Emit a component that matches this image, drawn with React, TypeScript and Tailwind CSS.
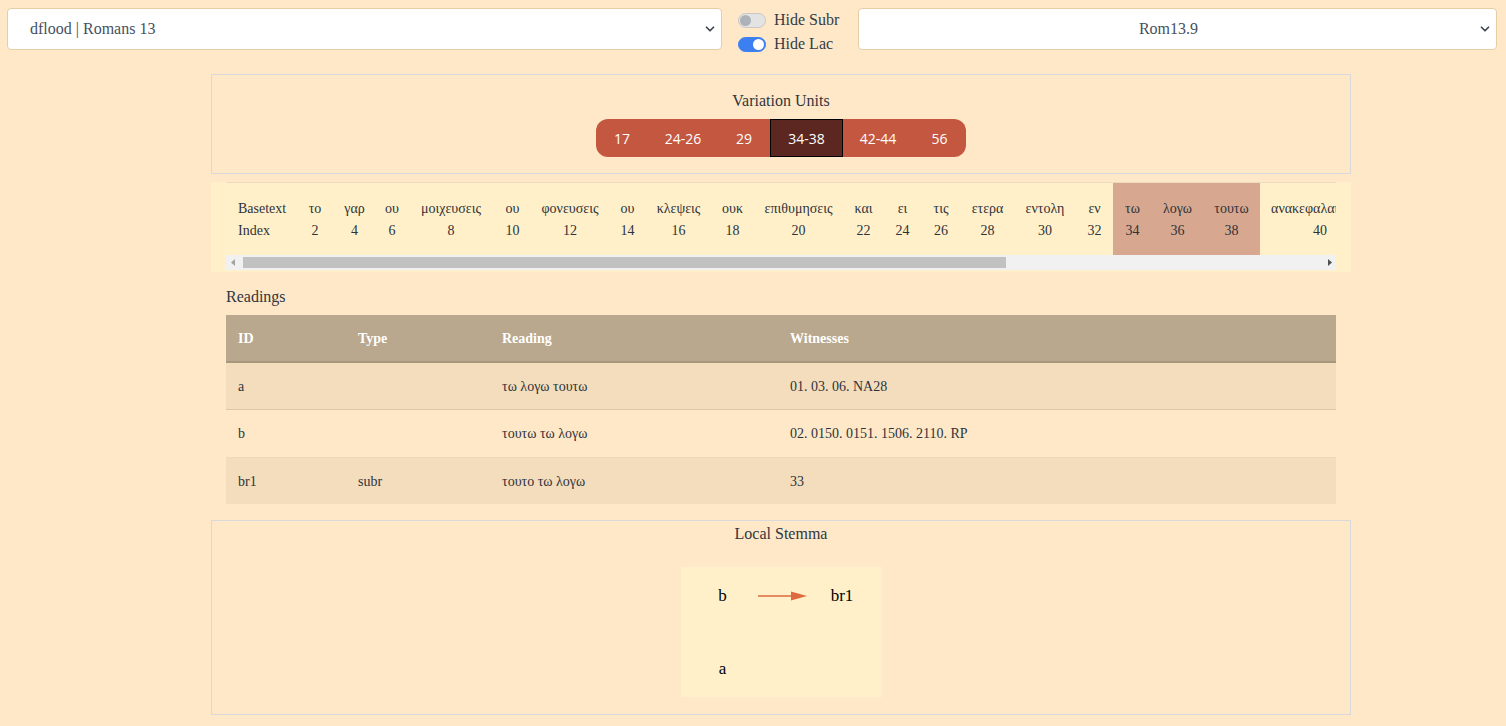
import { ChevronDown } from "lucide-react";

type Col = { word: string; index: number; w: number };

const basetext: Col[] = [
  { word: "το", index: 2, w: 36 },
  { word: "γαρ", index: 4, w: 43 },
  { word: "ου", index: 6, w: 32 },
  { word: "μοιχευσεις", index: 8, w: 86 },
  { word: "ου", index: 10, w: 37 },
  { word: "φονευσεις", index: 12, w: 78 },
  { word: "ου", index: 14, w: 37 },
  { word: "κλεψεις", index: 16, w: 65 },
  { word: "ουκ", index: 18, w: 43 },
  { word: "επιθυμησεις", index: 20, w: 89 },
  { word: "και", index: 22, w: 41 },
  { word: "ει", index: 24, w: 37 },
  { word: "τις", index: 26, w: 40 },
  { word: "ετερα", index: 28, w: 53 },
  { word: "εντολη", index: 30, w: 62 },
  { word: "εν", index: 32, w: 37 },
  { word: "τω", index: 34, w: 39 },
  { word: "λογω", index: 36, w: 51 },
  { word: "τουτω", index: 38, w: 57 },
  { word: "ανακεφαλαιουται", index: 40, w: 120 },
];

const units = [
  { label: "17", w: 52 },
  { label: "24-26", w: 70 },
  { label: "29", w: 52 },
  { label: "34-38", w: 73, active: true },
  { label: "42-44", w: 70 },
  { label: "56", w: 53 },
];

const readings = [
  { id: "a", type: "", text: "τω λογω τουτω", wits: "01. 03. 06. NA28" },
  { id: "b", type: "", text: "τουτω τω λογω", wits: "02. 0150. 0151. 1506. 2110. RP" },
  { id: "br1", type: "subr", text: "τουτο τω λογω", wits: "33" },
];

const Toggle = ({ on, label }: { on?: boolean; label: string }) => (
  <div className="flex items-center gap-2 h-[24px]">
    <div
      className={`w-[28px] h-[15px] rounded-full border flex items-center px-[1px] ${
        on ? "bg-[#3b7ff0] border-[#3b7ff0] justify-end" : "bg-[#e3e3e3] border-[#c8c8c8] justify-start"
      }`}
    >
      <div className={`w-[11px] h-[11px] rounded-full ${on ? "bg-white" : "bg-[#adb2b8]"}`} />
    </div>
    <span className="text-[16px] text-[#343c48]">{label}</span>
  </div>
);

export default function App() {
  return (
    <div className="min-h-[726px] bg-[#ffe8c7] text-[#343c48] font-['Liberation_Serif',serif]">
      {/* top controls */}
      <div className="flex items-start pl-[7px] pr-[9px] pt-[8px] gap-[16px]">
        <div className="w-[715px] h-[42px] bg-white border border-[#e6cda5] rounded-[4px] flex items-center justify-between pl-[22px] pr-[4px]">
          <span className="text-[16px] text-[#46505e]">dflood | Romans 13</span>
          <ChevronDown size={14} strokeWidth={3} className="text-[#3f4650]" />
        </div>
        <div className="flex flex-col w-[104px]">
          <Toggle label="Hide Subr" />
          <Toggle on label="Hide Lac" />
        </div>
        <div className="flex-1 h-[42px] bg-white border border-[#e6cda5] rounded-[4px] flex items-center pr-[4px]">
          <span className="flex-1 text-center text-[16px] text-[#46505e]">Rom13.9</span>
          <ChevronDown size={14} strokeWidth={3} className="text-[#3f4650]" />
        </div>
      </div>

      <div className="ml-[211px] w-[1140px] mt-[18px] pb-[10px]">
        {/* variation units */}
        <div className="border border-[#d9d9dc] flex flex-col items-center pt-[15px] pb-[16px]">
          <h3 className="text-[16px] leading-[22px] text-[#2f3640]">Variation Units</h3>
          <div className="mt-[7px] flex h-[38px] rounded-[12px] overflow-hidden bg-[#c4573f] font-['Open_Sans',sans-serif] text-[14px] text-white">
            {units.map((u) => (
              <div
                key={u.label}
                className={`flex items-center justify-center ${u.active ? "bg-[#5c2720] border border-black" : ""}`}
                style={{ width: u.w }}
              >
                {u.label}
              </div>
            ))}
          </div>
        </div>

        {/* basetext */}
        <div className="mt-[8px] bg-[#fff0c9] px-[15px] pb-[2px]">
          <div className="border-t border-[#eadcbc] overflow-hidden">
            <div className="flex w-max text-[14px] text-[#2e333b]">
              <div className="flex flex-col w-[71px] shrink-0 pl-[12px]">
                <span className="pt-[17px] leading-[18px]">Basetext</span>
                <span className="pt-[4px] pb-[15px] leading-[18px]">Index</span>
              </div>
              {basetext.map((c, i) => (
                <div
                  key={`bt-${i}`}
                  className={`flex flex-col items-center shrink-0 whitespace-nowrap ${
                    c.index >= 34 && c.index <= 38 ? "bg-[#d7a88f]" : ""
                  }`}
                  style={{ width: c.w }}
                >
                  <span className="pt-[17px] leading-[18px]">{c.word}</span>
                  <span className="pt-[4px] pb-[15px] leading-[18px]">{c.index}</span>
                </div>
              ))}
            </div>
          </div>
          {/* scrollbar */}
          <div className="flex items-center h-[15px] bg-[#f1f1f1]">
            <div className="w-[13px] flex items-center justify-center">
              <svg width="4" height="7" viewBox="0 0 4 7">
                <polygon points="4,0 4,7 0,3.5" fill="#a3a3a3" />
              </svg>
            </div>
            <div className="ml-[4px] w-[763px] h-[11px] bg-[#c1c1c1]" />
            <div className="flex-1" />
            <div className="w-[13px] flex items-center justify-center">
              <svg width="4" height="7" viewBox="0 0 4 7">
                <polygon points="0,0 0,7 4,3.5" fill="#505050" />
              </svg>
            </div>
          </div>
        </div>

        {/* readings */}
        <div className="px-[15px]">
          <h4 className="mt-[16px] text-[16px] leading-[18px] text-[#2f3640]">Readings</h4>
          <div className="mt-[9px] text-[14px]">
            <div className="flex h-[48px] items-center bg-[#b9a88d] border-b-2 border-[#a6977d] text-white font-bold">
              <div className="w-[120px] pl-[12px]">ID</div>
              <div className="w-[144px] pl-[12px]">Type</div>
              <div className="w-[288px] pl-[12px]">Reading</div>
              <div className="flex-1 pl-[12px]">Witnesses</div>
            </div>
            {readings.map((r, i) => (
              <div
                key={r.id}
                className={`flex h-[47px] items-center text-[#2e333b] ${
                  i % 2 === 0 ? "bg-[#f4ddbc]" : "bg-[#ffe8c7]"
                } ${i === 0 ? "border-b border-[#dcc7a6]" : ""} ${i === 2 ? "border-t border-[#f0d9b6]" : ""}`}
              >
                <div className="w-[120px] pl-[12px]">{r.id}</div>
                <div className="w-[144px] pl-[12px]">{r.type}</div>
                <div className="w-[288px] pl-[12px]">{r.text}</div>
                <div className="flex-1 pl-[12px]">{r.wits}</div>
              </div>
            ))}
          </div>
        </div>

        {/* local stemma */}
        <div className="mt-[16px] border border-[#d9d9dc] flex flex-col items-center pt-[1px] pb-[17px]">
          <h3 className="text-[16px] leading-[24px] text-[#2f3640]">Local Stemma</h3>
          <div className="mt-[21px] w-[201px] h-[130px] bg-[#fff0c9]">
            <svg width="201" height="130" viewBox="0 0 201 130" className="font-['Liberation_Serif',serif]">
              <text x="41.5" y="34" textAnchor="middle" fontSize="17" fill="#000">b</text>
              <text x="161" y="34" textAnchor="middle" fontSize="17" fill="#000">br1</text>
              <text x="41.5" y="107" textAnchor="middle" fontSize="17" fill="#000">a</text>
              <line x1="77" y1="29" x2="112" y2="29" stroke="#dd6b3f" strokeWidth="1.3" />
              <polygon points="110,24.5 126,29 110,33.5" fill="#dd6b3f" />
            </svg>
          </div>
        </div>
      </div>
    </div>
  );
}
